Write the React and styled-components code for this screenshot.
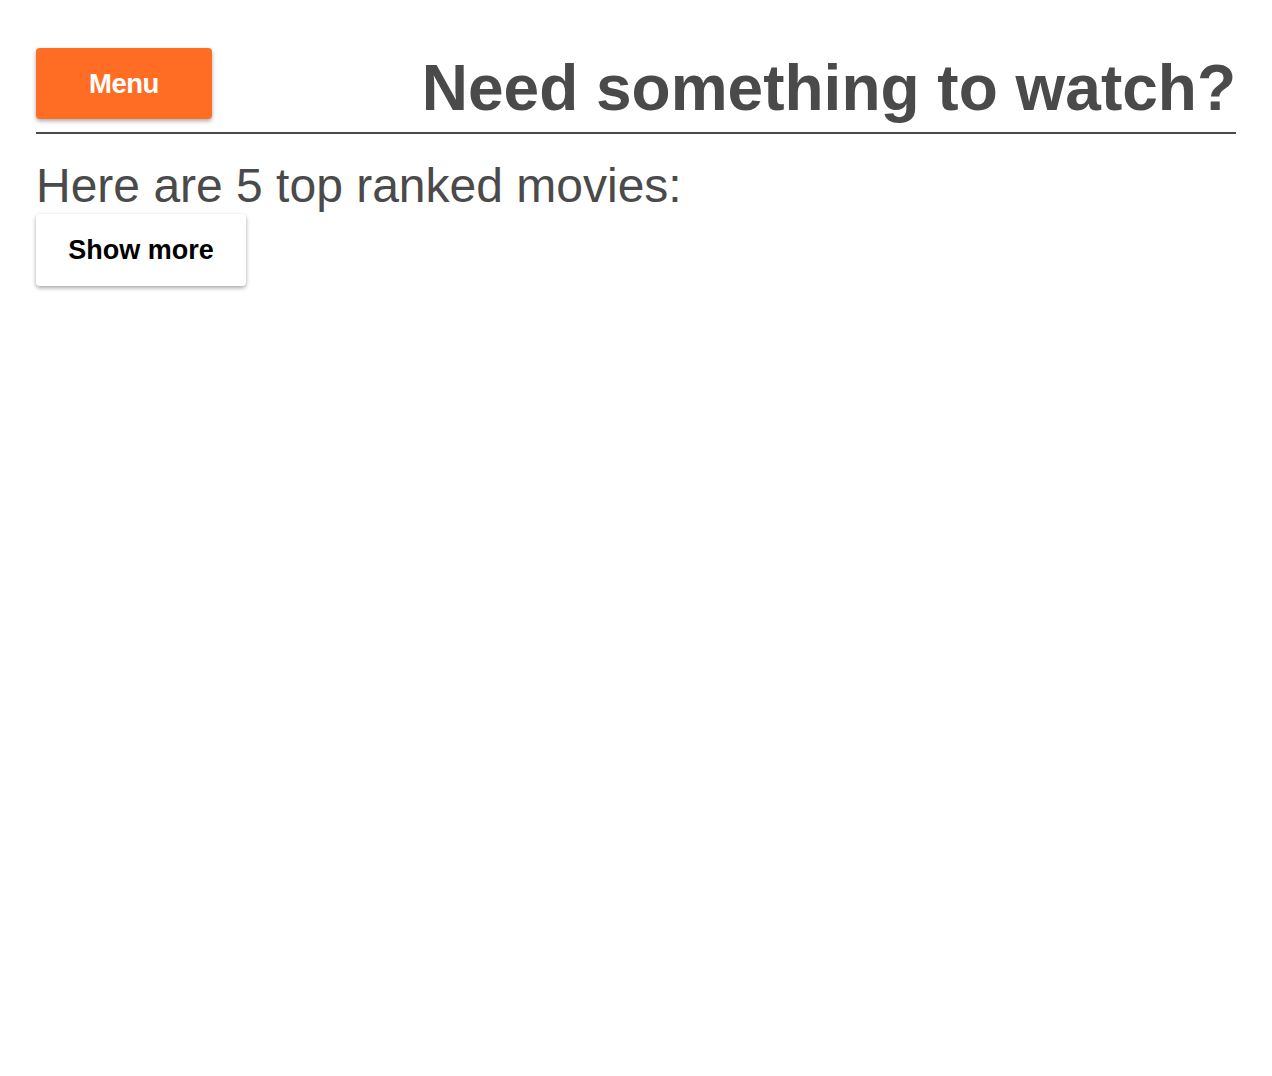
import React from "react";
import styled, { createGlobalStyle } from "styled-components";

const GlobalStyle = createGlobalStyle`
  html, body {
    margin: 0;
    padding: 0;
    background: #ffffff;
  }
  body {
    font-family: "Liberation Sans", Arial, Helvetica, sans-serif;
  }
`;

const Page = styled.div`
  min-height: 1076px;
  box-sizing: border-box;
  padding: 48px 36px 40px 36px;
`;

const Header = styled.header`
  display: flex;
  justify-content: space-between;
  align-items: flex-start;
  padding-bottom: 7px;
  border-bottom: 2px solid #4a4a4a;
`;

const Button = styled.button`
  display: flex;
  align-items: center;
  justify-content: center;
  box-sizing: border-box;
  border: none;
  border-radius: 4px;
  padding: 0;
  margin: 0;
  cursor: pointer;
  font-family: "Liberation Sans", Arial, Helvetica, sans-serif;
  box-shadow: 0 2px 4px rgba(0, 0, 0, 0.35);
  width: ${(p) => p.$w}px;
  height: ${(p) => p.$h}px;
  background: ${(p) => (p.$primary ? "#ff6d24" : "#ffffff")};
  color: ${(p) => (p.$primary ? "#ffffff" : "#000000")};
  font-size: ${(p) => (p.$primary ? "27.5px" : "27px")};
  font-weight: 700;
  letter-spacing: ${(p) => (p.$primary ? "-0.5px" : "0")};
`;

const Title = styled.h1`
  margin: 3px 0 0 0;
  font-size: 64px;
  line-height: 74px;
  font-weight: 700;
  color: #4a4a4a;
`;

const Subtitle = styled.p`
  margin: 24px 0 0 0;
  font-size: 48px;
  line-height: 56px;
  font-weight: 400;
  color: #4a4a4a;
`;

export default function App() {
  return (
    <>
      <GlobalStyle />
      <Page>
        <Header>
          <Button $primary $w={176} $h={71}>
            Menu
          </Button>
          <Title>Need something to watch?</Title>
        </Header>
        <Subtitle>Here are 5 top ranked movies:</Subtitle>
        <Button $w={210} $h={72}>
          Show more
        </Button>
      </Page>
    </>
  );
}
